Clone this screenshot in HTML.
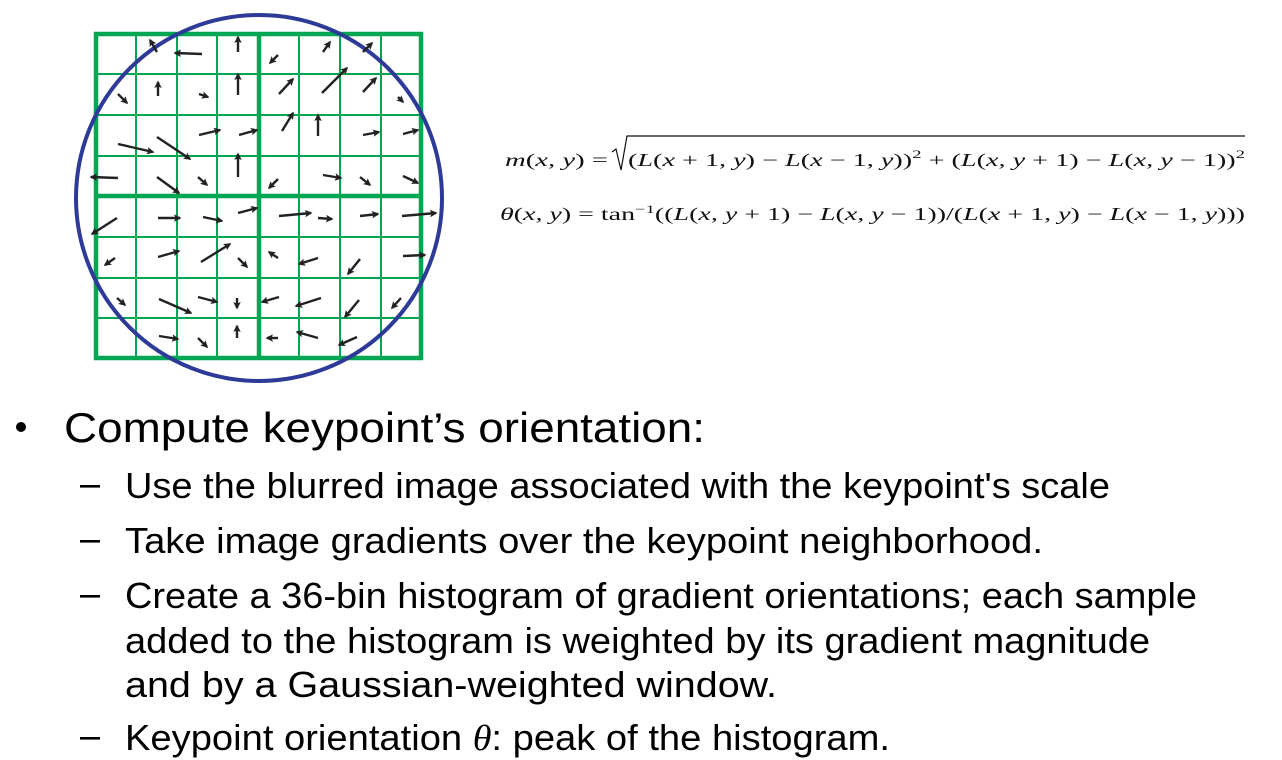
<!DOCTYPE html>
<html><head><meta charset="utf-8"><style>
html,body{margin:0;padding:0;background:#fff;}
svg{display:block;}
</style></head><body>
<svg width="1282" height="760" viewBox="0 0 1282 760" xmlns="http://www.w3.org/2000/svg">
<defs>
<marker id="a" viewBox="0 0 10 10" refX="8" refY="5" markerWidth="7.5" markerHeight="7.5" orient="auto" markerUnits="userSpaceOnUse"><path d="M0,0 L10,5 L0,10 L2,5 z" fill="#222"/></marker>
</defs>
<g stroke="#00a651" fill="none">
<g stroke-width="2">
<line x1="136" y1="33" x2="136" y2="359"/><line x1="177" y1="33" x2="177" y2="359"/><line x1="217" y1="33" x2="217" y2="359"/>
<line x1="299" y1="33" x2="299" y2="359"/><line x1="340" y1="33" x2="340" y2="359"/><line x1="381" y1="33" x2="381" y2="359"/>
<line x1="95" y1="74" x2="422" y2="74"/><line x1="95" y1="115" x2="422" y2="115"/><line x1="95" y1="156" x2="422" y2="156"/>
<line x1="95" y1="237" x2="422" y2="237"/><line x1="95" y1="278" x2="422" y2="278"/><line x1="95" y1="318" x2="422" y2="318"/>
</g>
<g stroke-width="4.5">
<rect x="96" y="34" width="325" height="324"/>
<line x1="259" y1="34" x2="259" y2="358"/><line x1="96" y1="196" x2="421" y2="196"/>
</g>
</g>
<circle cx="259" cy="198" r="183" fill="none" stroke="#2e3a98" stroke-width="4"/>
<g stroke="#222" stroke-width="2.4" marker-end="url(#a)" fill="none">
<line x1="157" y1="52" x2="150" y2="40"/><line x1="202" y1="54" x2="175" y2="53"/><line x1="238" y1="52" x2="238" y2="37"/>
<line x1="278" y1="55" x2="270" y2="63"/><line x1="323" y1="52" x2="330" y2="42"/><line x1="363" y1="52" x2="372" y2="43"/>
<line x1="118" y1="94" x2="127" y2="103"/><line x1="158" y1="96" x2="158" y2="82"/><line x1="199" y1="94" x2="208" y2="97"/>
<line x1="238" y1="95" x2="238" y2="74"/><line x1="279" y1="94" x2="293" y2="79"/><line x1="322" y1="93" x2="347" y2="68"/>
<line x1="363" y1="92" x2="376" y2="78"/><line x1="398" y1="97" x2="403" y2="102"/>
<line x1="282" y1="131" x2="293" y2="113"/><line x1="318" y1="136" x2="318" y2="115"/><line x1="199" y1="135" x2="220" y2="130"/>
<line x1="239" y1="135" x2="257" y2="130"/><line x1="363" y1="135" x2="379" y2="132"/><line x1="403" y1="134" x2="418" y2="130"/>
<line x1="118" y1="144" x2="153" y2="152"/><line x1="157" y1="137" x2="190" y2="159"/>
<line x1="238" y1="177" x2="238" y2="154"/><line x1="118" y1="178" x2="91" y2="177"/><line x1="157" y1="177" x2="179" y2="193"/>
<line x1="198" y1="177" x2="207" y2="185"/><line x1="278" y1="179" x2="269" y2="188"/><line x1="323" y1="175" x2="341" y2="178"/>
<line x1="360" y1="177" x2="370" y2="185"/><line x1="403" y1="176" x2="418" y2="183"/>
<line x1="117" y1="218" x2="92" y2="234"/><line x1="158" y1="218" x2="180" y2="218"/><line x1="203" y1="217" x2="222" y2="221"/>
<line x1="238" y1="213" x2="257" y2="208"/><line x1="279" y1="216" x2="311" y2="213"/><line x1="318" y1="218" x2="332" y2="219"/>
<line x1="360" y1="216" x2="378" y2="214"/><line x1="402" y1="216" x2="436" y2="213"/>
<line x1="115" y1="258" x2="105" y2="265"/><line x1="158" y1="257" x2="179" y2="251"/><line x1="201" y1="262" x2="230" y2="244"/>
<line x1="238" y1="258" x2="247" y2="267"/><line x1="278" y1="258" x2="269" y2="252"/><line x1="318" y1="258" x2="299" y2="264"/>
<line x1="360" y1="259" x2="348" y2="274"/><line x1="403" y1="256" x2="425" y2="255"/>
<line x1="117" y1="298" x2="125" y2="305"/><line x1="159" y1="299" x2="191" y2="313"/><line x1="198" y1="297" x2="217" y2="302"/>
<line x1="237" y1="298" x2="237" y2="308"/><line x1="279" y1="297" x2="262" y2="302"/><line x1="321" y1="298" x2="296" y2="306"/>
<line x1="359" y1="300" x2="345" y2="317"/><line x1="401" y1="298" x2="392" y2="308"/>
<line x1="159" y1="336" x2="178" y2="339"/><line x1="198" y1="338" x2="207" y2="347"/><line x1="237" y1="338" x2="237" y2="326"/>
<line x1="278" y1="338" x2="267" y2="338"/><line x1="318" y1="338" x2="297" y2="332"/><line x1="357" y1="337" x2="339" y2="345"/>
</g>
<g font-family="Liberation Serif, serif" font-size="18" fill="#111">
<text x="505" y="166" textLength="103" lengthAdjust="spacingAndGlyphs"><tspan font-style="italic">m</tspan>(<tspan font-style="italic">x, y</tspan>) =</text>
<path d="M612,152 L616,149 L621,170 L627,136 L1245,136" stroke="#111" stroke-width="1.2" fill="none"/>
<text x="628" y="166" textLength="617" lengthAdjust="spacingAndGlyphs">(<tspan font-style="italic">L</tspan>(<tspan font-style="italic">x</tspan> + 1, <tspan font-style="italic">y</tspan>) − <tspan font-style="italic">L</tspan>(<tspan font-style="italic">x</tspan> − 1, <tspan font-style="italic">y</tspan>))<tspan dy="-8" font-size="12">2</tspan><tspan dy="8"> + (</tspan><tspan font-style="italic">L</tspan>(<tspan font-style="italic">x, y</tspan> + 1) − <tspan font-style="italic">L</tspan>(<tspan font-style="italic">x, y</tspan> − 1))<tspan dy="-8" font-size="12">2</tspan></text>
<text x="500" y="220" textLength="745" lengthAdjust="spacingAndGlyphs"><tspan font-style="italic">θ</tspan>(<tspan font-style="italic">x, y</tspan>) = tan<tspan dy="-7" font-size="12">−1</tspan><tspan dy="7">((</tspan><tspan font-style="italic">L</tspan>(<tspan font-style="italic">x, y</tspan> + 1) − <tspan font-style="italic">L</tspan>(<tspan font-style="italic">x, y</tspan> − 1))/(<tspan font-style="italic">L</tspan>(<tspan font-style="italic">x</tspan> + 1, <tspan font-style="italic">y</tspan>) − <tspan font-style="italic">L</tspan>(<tspan font-style="italic">x</tspan> − 1, <tspan font-style="italic">y</tspan>)))</text>
</g>
<g font-family="Liberation Sans, Arial, sans-serif" fill="#000">
<circle cx="21" cy="427" r="5"/>
<text x="64" y="442" font-size="42" textLength="641" lengthAdjust="spacingAndGlyphs">Compute keypoint’s orientation:</text>
<g font-size="36">
<rect x="80" y="485" width="20" height="2.6"/>
<rect x="80" y="540" width="20" height="2.6"/>
<rect x="80" y="595" width="20" height="2.6"/>
<rect x="80" y="737" width="20" height="2.6"/>
<text x="125" y="498" textLength="985" lengthAdjust="spacingAndGlyphs">Use the blurred image associated with the keypoint's scale</text>
<text x="125" y="553" textLength="918" lengthAdjust="spacingAndGlyphs">Take image gradients over the keypoint neighborhood.</text>
<text x="125" y="608" textLength="1072" lengthAdjust="spacingAndGlyphs">Create a 36-bin histogram of gradient orientations; each sample</text>
<text x="125" y="653" textLength="1025" lengthAdjust="spacingAndGlyphs">added to the histogram is weighted by its gradient magnitude</text>
<text x="125" y="697" textLength="652" lengthAdjust="spacingAndGlyphs">and by a Gaussian-weighted window.</text>
<text x="125" y="750" textLength="765" lengthAdjust="spacingAndGlyphs">Keypoint orientation <tspan font-family="Liberation Serif, serif" font-style="italic">θ</tspan>: peak of the histogram.</text>
</g>
</g>
</svg>
</body></html>
